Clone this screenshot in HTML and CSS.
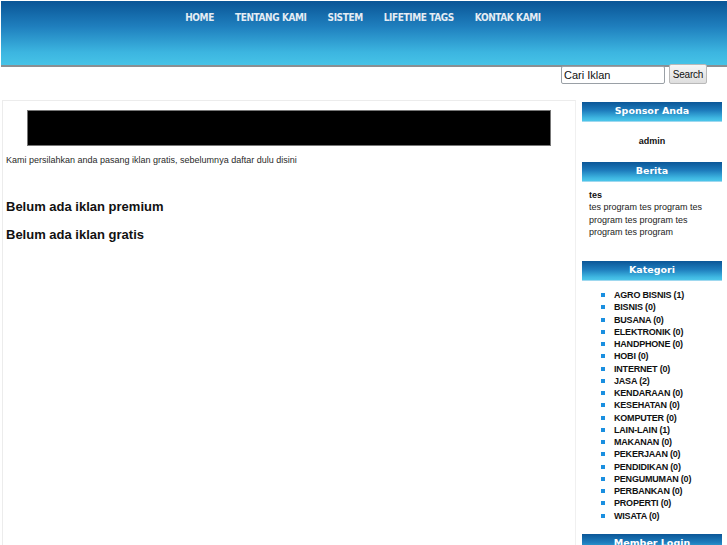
FILE: index.html
```html
<!DOCTYPE html>
<html>
<head>
<meta charset="utf-8">
<link rel="stylesheet" href="styles.css">
</head>
<body>
<div class="header">
  <ul class="nav">
    <li>HOME</li>
    <li>TENTANG KAMI</li>
    <li>SISTEM</li>
    <li>LIFETIME TAGS</li>
    <li>KONTAK KAMI</li>
  </ul>
</div>
<div class="searchbar">
  <input class="search-input" type="text" value="Cari Iklan">
  <button class="search-btn">Search</button>
</div>
<div class="page">
  <div class="main">
    <div class="banner"></div>
    <p class="intro">Kami persilahkan anda pasang iklan gratis, sebelumnya daftar dulu disini</p>
    <h2 class="empty first">Belum ada iklan premium</h2>
    <h2 class="empty">Belum ada iklan gratis</h2>
  </div>
  <div class="sidebar">
    <div class="box-title">Sponsor Anda</div>
    <div class="sponsor">admin</div>
    <div class="box-title">Berita</div>
    <div class="news">
      <div class="news-title">tes</div>
      <div class="news-body">tes program tes program tes program tes program tes program tes program</div>
    </div>
    <div class="box-title">Kategori</div>
    <ul class="cats">
      <li>AGRO BISNIS (1)</li>
      <li>BISNIS (0)</li>
      <li>BUSANA (0)</li>
      <li>ELEKTRONIK (0)</li>
      <li>HANDPHONE (0)</li>
      <li>HOBI (0)</li>
      <li>INTERNET (0)</li>
      <li>JASA (2)</li>
      <li>KENDARAAN (0)</li>
      <li>KESEHATAN (0)</li>
      <li>KOMPUTER (0)</li>
      <li>LAIN-LAIN (1)</li>
      <li>MAKANAN (0)</li>
      <li>PEKERJAAN (0)</li>
      <li>PENDIDIKAN (0)</li>
      <li>PENGUMUMAN (0)</li>
      <li>PERBANKAN (0)</li>
      <li>PROPERTI (0)</li>
      <li>WISATA (0)</li>
    </ul>
    <div class="box-title">Member Login</div>
  </div>
</div>
</body>
</html>
```
FILE: styles.css
```css
html, body {
  margin: 0;
  padding: 0;
  background: #fff;
  overflow: hidden;
  height: 545px;
}
body {
  font-family: "Liberation Sans", Arial, sans-serif;
  color: #111;
}
.header {
  margin: 1px 0 0 1px;
  height: 64px;
  background: linear-gradient(to bottom, #0a5596 0%, #1f7fbe 40%, #3cb5e0 80%, #46c3e7 100%);
  border-bottom: 2px solid #8a8f93;
}
.nav {
  list-style: none;
  margin: 0;
  padding: 10px 0 0 0;
  display: flex;
  justify-content: center;
  gap: 21px;
  font-family: "DejaVu Sans Condensed", "DejaVu Sans", sans-serif;
  font-weight: bold;
  font-size: 10px;
  letter-spacing: -0.4px;
  color: #e4ecf4;
  line-height: 14px;
  padding-left: 0;
  padding-right: 2px;
}
.searchbar {
  display: flex;
  justify-content: flex-end;
  align-items: flex-start;
  gap: 4px;
  padding-right: 20px;
  height: 36px;
  margin-top: -3px;
}
.search-input {
  width: 104px;
  height: 18px;
  box-sizing: border-box;
  margin-top: 2px;
  border: 1px solid #9aa0a6;
  border-radius: 2px;
  font-family: "Liberation Sans", Arial, sans-serif;
  font-size: 11px;
  padding: 0 2px;
  color: #111;
}
.search-btn {
  width: 38px;
  height: 20px;
  box-sizing: border-box;
  border: 1px solid #b9b9b9;
  border-radius: 2px;
  background: linear-gradient(to bottom, #f6f6f6, #dedede);
  font-family: "Liberation Sans", Arial, sans-serif;
  font-size: 10px;
  letter-spacing: -0.2px;
  padding: 0;
  color: #111;
}
.page {
  display: flex;
  gap: 6px;
  padding-left: 2px;
}
.main {
  width: 574px;
  box-sizing: border-box;
  height: 460px;
  border: 1px solid #ececec;
  border-right-color: #f0f0f0;
  padding: 9px 0 0 3px;
}
.banner {
  margin-left: 21px;
  width: 524px;
  height: 36px;
  box-sizing: border-box;
  background: #000;
  border: 1px solid #777;
}
.intro {
  margin: 8px 0 0 0;
  font-size: 9px;
  line-height: 12px;
  color: #2a2a2a;
}
.empty {
  margin: 0;
  font-size: 13px;
  line-height: 16px;
  font-weight: bold;
  color: #111;
}
.empty.first {
  margin-top: 33px;
}
.empty + .empty {
  margin-top: 12px;
}
.sidebar {
  width: 140px;
  padding-top: 2px;
}
.box-title {
  height: 20px;
  box-sizing: border-box;
  background: linear-gradient(to bottom, #0b5697 0%, #1e7dbd 45%, #3fb8e2 85%, #4cc6ea 100%);
  border-bottom: 1px solid #9fd8ef;
  color: #fff;
  text-align: center;
  font-family: "DejaVu Sans", sans-serif;
  font-weight: bold;
  font-size: 9.5px;
  line-height: 18px;
}
.sponsor {
  height: 40px;
  text-align: center;
  font-weight: bold;
  font-size: 9px;
  line-height: 38px;
}
.news {
  padding: 7px 0 0 7px;
  height: 72px;
  font-size: 9px;
  line-height: 12.3px;
  color: #222;
}
.news-title {
  font-weight: bold;
  color: #111;
}
.news-body {
  width: 128px;
}
.cats {
  list-style: none;
  margin: 0;
  padding: 8px 0 12px 19px;
  font-weight: bold;
  font-size: 9px;
  letter-spacing: -0.2px;
  line-height: 12.25px;
  color: #111;
}
.cats li {
  display: flex;
  align-items: center;
  gap: 9px;
}
.cats li::before {
  content: "";
  width: 4px;
  height: 4px;
  background: #1a8fe0;
  flex: none;
}
```
